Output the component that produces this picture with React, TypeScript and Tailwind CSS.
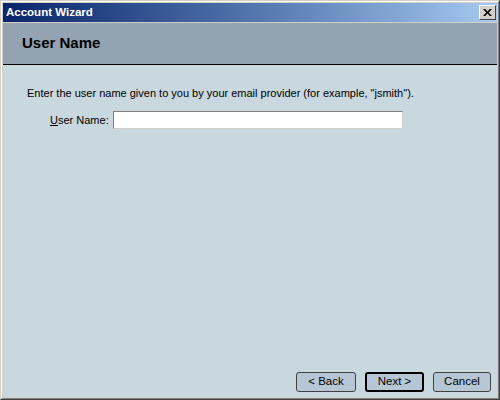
import React from "react";

export default function App() {
  const font = { fontFamily: '"Liberation Sans", Arial, sans-serif' };
  return (
    <div className="w-[500px] h-[400px] bg-[#d4d0c8] border-t border-l border-t-[#d4d0c8] border-l-[#d4d0c8] border-r border-b border-r-[#404040] border-b-[#404040]" style={font}>
      <div className="w-full h-full border-t border-l border-t-white border-l-white border-r border-b border-r-[#808080] border-b-[#808080] p-px flex flex-col">
        <div className="h-[19px] shrink-0 flex items-center justify-between pl-[3px] pr-[1px] bg-gradient-to-r from-[#0a246a] to-[#a6caf0]">
          <span className="text-white font-bold text-[11.5px] leading-none">Account Wizard</span>
          <div className="w-[17px] h-[15px] bg-[#d4d0c8] border-t border-l border-t-white border-l-white border-r border-b border-r-[#404040] border-b-[#404040] flex items-center justify-center">
            <svg width="9" height="7" viewBox="0 0 9 7">
              <path d="M0 0h2.2l2.3 2.4L6.8 0H9L5.7 3.5 9 7H6.8L4.5 4.6 2.2 7H0l3.3-3.5z" fill="#000" />
            </svg>
          </div>
        </div>
        <div className="h-px shrink-0 bg-[#d4d0c8]" />
        <div className="flex-1 flex flex-col bg-[#c9d7de]">
          <div className="h-[42px] shrink-0 bg-[#93a3b2] flex items-center pl-[19px] border-b border-b-black">
            <span className="font-bold text-[15px] text-black">User Name</span>
          </div>
          <div className="flex-1 flex flex-col pl-[24px] pr-[6px] pb-[5px]">
            <div className="pt-[22px] text-[11px] text-black leading-[13px]">
              Enter the user name given to you by your email provider (for example, "jsmith").
            </div>
            <div className="flex items-center mt-[11px] pl-[23px] gap-[4px]">
              <span className="text-[11px] text-black">
                <span className="underline">U</span>ser Name:
              </span>
              <div className="w-[290px] h-[18px] bg-white border-t border-l border-t-[#808080] border-l-[#808080] border-r border-b border-r-[#d4d0c8] border-b-[#d4d0c8]" />
            </div>
            <div className="flex-1" />
            <div className="flex justify-end gap-[9px]">
              <div className="w-[60px] h-[20px] rounded-[3px] border border-[#404040] bg-[#b7c6d4] flex items-center justify-center text-[11.5px] text-black">&lt; Back</div>
              <div className="w-[59px] h-[20px] rounded-[3px] border-2 border-black bg-[#b7c6d4] flex items-center justify-center text-[11.5px] text-black">Next &gt;</div>
              <div className="w-[58px] h-[20px] rounded-[3px] border border-[#404040] bg-[#b7c6d4] flex items-center justify-center text-[11.5px] text-black">Cancel</div>
            </div>
          </div>
        </div>
      </div>
    </div>
  );
}
